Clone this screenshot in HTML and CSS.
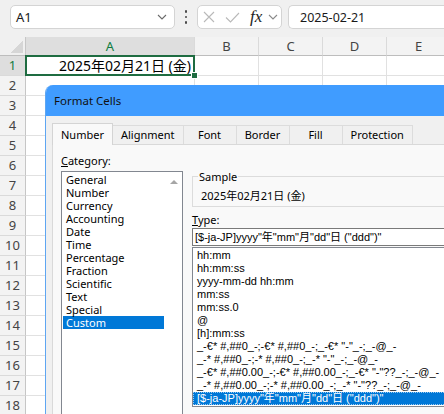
FILE: index.html
```html
<!DOCTYPE html>
<html lang="en">
<head>
    <meta charset="UTF-8">
    <meta name="viewport" content="width=device-width, initial-scale=1.0">
    <title>Format Cells</title>
    <link rel="stylesheet" href="styles.css">
</head>
<body>

<!-- Formula bar -->
<div class="formula-bar">
    <div class="name-box">
        <span>A1</span>
        <svg class="chevron" width="10" height="6" viewBox="0 0 10 6"><path d="M1 1l4 4 4-4" fill="none" stroke="#6b6b6b" stroke-width="1.1"/></svg>
    </div>
    <div class="dots"><span></span><span></span><span></span></div>
    <div class="fx-box">
        <svg class="icon-cancel" width="12" height="12" viewBox="0 0 12 12"><path d="M1 1l10 10M11 1L1 11" fill="none" stroke="#b9b9b9" stroke-width="1.1"/></svg>
        <svg class="icon-enter" width="15" height="11" viewBox="0 0 15 11"><path d="M1 5.5l4.5 4.5L14 1" fill="none" stroke="#b9b9b9" stroke-width="1.1"/></svg>
        <span class="fx">fx</span>
        <svg class="chevron" width="10" height="6" viewBox="0 0 10 6"><path d="M1 1l4 4 4-4" fill="none" stroke="#8a8a8a" stroke-width="1.1"/></svg>
    </div>
    <div class="formula-input">2025-02-21</div>
</div>

<!-- Sheet -->
<div class="sheet">
    <div class="row head">
        <div class="corner"></div>
        <div class="col col-a sel">A</div><div class="col">B</div><div class="col">C</div><div class="col">D</div><div class="col">E</div>
    </div>
    <div class="row">
        <div class="rh sel">1</div>
        <div class="cell cell-a active">2025年02月21日 (金)</div><div class="cell"></div><div class="cell"></div><div class="cell"></div><div class="cell"></div>
    </div>
    <div class="row"><div class="rh">2</div><div class="cell cell-a"></div><div class="cell"></div><div class="cell"></div><div class="cell"></div><div class="cell"></div></div>
    <div class="row"><div class="rh">3</div><div class="cell cell-a"></div><div class="cell"></div><div class="cell"></div><div class="cell"></div><div class="cell"></div></div>
    <div class="row"><div class="rh">4</div><div class="cell cell-a"></div><div class="cell"></div><div class="cell"></div><div class="cell"></div><div class="cell"></div></div>
    <div class="row"><div class="rh">5</div><div class="cell cell-a"></div><div class="cell"></div><div class="cell"></div><div class="cell"></div><div class="cell"></div></div>
    <div class="row"><div class="rh">6</div><div class="cell cell-a"></div><div class="cell"></div><div class="cell"></div><div class="cell"></div><div class="cell"></div></div>
    <div class="row"><div class="rh">7</div><div class="cell cell-a"></div><div class="cell"></div><div class="cell"></div><div class="cell"></div><div class="cell"></div></div>
    <div class="row"><div class="rh">8</div><div class="cell cell-a"></div><div class="cell"></div><div class="cell"></div><div class="cell"></div><div class="cell"></div></div>
    <div class="row"><div class="rh">9</div><div class="cell cell-a"></div><div class="cell"></div><div class="cell"></div><div class="cell"></div><div class="cell"></div></div>
    <div class="row"><div class="rh">10</div><div class="cell cell-a"></div><div class="cell"></div><div class="cell"></div><div class="cell"></div><div class="cell"></div></div>
    <div class="row"><div class="rh">11</div><div class="cell cell-a"></div><div class="cell"></div><div class="cell"></div><div class="cell"></div><div class="cell"></div></div>
    <div class="row"><div class="rh">12</div><div class="cell cell-a"></div><div class="cell"></div><div class="cell"></div><div class="cell"></div><div class="cell"></div></div>
    <div class="row"><div class="rh">13</div><div class="cell cell-a"></div><div class="cell"></div><div class="cell"></div><div class="cell"></div><div class="cell"></div></div>
    <div class="row"><div class="rh">14</div><div class="cell cell-a"></div><div class="cell"></div><div class="cell"></div><div class="cell"></div><div class="cell"></div></div>
    <div class="row"><div class="rh">15</div><div class="cell cell-a"></div><div class="cell"></div><div class="cell"></div><div class="cell"></div><div class="cell"></div></div>
    <div class="row"><div class="rh">16</div><div class="cell cell-a"></div><div class="cell"></div><div class="cell"></div><div class="cell"></div><div class="cell"></div></div>
    <div class="row"><div class="rh">17</div><div class="cell cell-a"></div><div class="cell"></div><div class="cell"></div><div class="cell"></div><div class="cell"></div></div>
    <div class="row"><div class="rh">18</div><div class="cell cell-a"></div><div class="cell"></div><div class="cell"></div><div class="cell"></div><div class="cell"></div></div>
</div>

<!-- Format Cells dialog -->
<div class="dialog">
    <div class="dialog-title">Format Cells</div>

    <div class="tabs">
        <div class="tab active">Number</div>
        <div class="tab">Alignment</div>
        <div class="tab">Font</div>
        <div class="tab">Border</div>
        <div class="tab">Fill</div>
        <div class="tab">Protection</div>
    </div>

    <div class="tab-panel">
        <div class="category">
            <div class="label"><u>C</u>ategory:</div>
            <div class="listbox">
                <ul class="category-list">
                    <li>General</li>
                    <li>Number</li>
                    <li>Currency</li>
                    <li>Accounting</li>
                    <li>Date</li>
                    <li>Time</li>
                    <li>Percentage</li>
                    <li>Fraction</li>
                    <li>Scientific</li>
                    <li>Text</li>
                    <li>Special</li>
                    <li class="selected">Custom</li>
                </ul>
                <div class="scrollbar"><span class="scroll-up"></span></div>
            </div>
        </div>

        <div class="details">
            <fieldset class="sample">
                <legend>Sample</legend>
                <div class="sample-value">2025年02月21日 (金)</div>
            </fieldset>

            <div class="label type-label"><u>T</u>ype:</div>
            <div class="type-input">[$-ja-JP]yyyy"年"mm"月"dd"日 ("ddd")"</div>
            <ul class="type-list">
                <li>hh:mm</li>
                <li>hh:mm:ss</li>
                <li>yyyy-mm-dd hh:mm</li>
                <li>mm:ss</li>
                <li>mm:ss.0</li>
                <li>@</li>
                <li>[h]:mm:ss</li>
                <li>_-€* #,##0_-;-€* #,##0_-;_-€* "-"_-;_-@_-</li>
                <li>_-* #,##0_-;-* #,##0_-;_-* "-"_-;_-@_-</li>
                <li>_-€* #,##0.00_-;-€* #,##0.00_-;_-€* "-"??_-;_-@_-</li>
                <li>_-* #,##0.00_-;-* #,##0.00_-;_-* "-"??_-;_-@_-</li>
                <li class="selected">[$-ja-JP]yyyy"年"mm"月"dd"日 ("ddd")"</li>
            </ul>
        </div>
    </div>
</div>

</body>
</html>
```

FILE: styles.css
```css
body {
    margin: 0;
    width: 444px;
    height: 414px;
    overflow: hidden;
    position: relative;
    font-family: "Noto Sans", "Noto Sans CJK JP", sans-serif;
    color: #000;
    background-color: #fff;
}

/* Formula bar */
.formula-bar {
    display: flex;
    align-items: flex-start;
    height: 37px;
    padding: 5px 0 0 10px;
    box-sizing: border-box;
    background-color: #f0f0f0;
}

.name-box, .fx-box, .formula-input {
    height: 24px;
    box-sizing: border-box;
    background-color: #fff;
    border: 1px solid #d4d4d4;
    border-radius: 5px;
    display: flex;
    align-items: center;
}

.name-box {
    width: 165px;
    padding: 0 7px 0 5px;
    justify-content: space-between;
    font-size: 13px;
    color: #1a1a1a;
}

.dots {
    width: 22px;
    height: 24px;
    display: flex;
    flex-direction: column;
    align-items: center;
    justify-content: center;
    gap: 3px;
}

.dots span {
    width: 2.5px;
    height: 2.5px;
    border-radius: 50%;
    background-color: #4a4a4a;
}

.fx-box {
    width: 85px;
    padding-left: 5px;
}

.icon-enter {
    margin-left: 10px;
}

.fx {
    margin-left: 10px;
    width: 16px;
    font-family: "Liberation Serif", "DejaVu Serif", serif;
    font-style: italic;
    font-size: 17px;
    line-height: 20px;
    color: #222;
}

.fx-box .chevron {
    margin-left: 2px;
}

.formula-input {
    flex: 1;
    margin-left: 6px;
    padding-left: 11px;
    border-right: none;
    border-radius: 5px 0 0 5px;
    font-size: 12.5px;
    color: #1a1a1a;
}

/* Sheet grid */
.row {
    display: flex;
    height: 20px;
}

.row.head {
    height: 19px;
}

.corner, .col, .rh, .cell {
    box-sizing: border-box;
    flex-shrink: 0;
}

.corner {
    width: 26px;
    border-right: 1px solid #c6c6c6;
    border-bottom: 1px solid #bdbdbd;
    background: #f0f0f0 linear-gradient(to bottom right, transparent 50%, #d6d6d6 50%) no-repeat right 2px bottom 2px / 13px 13px;
}

.col {
    width: 64px;
    background-color: #f3f3f3;
    border-right: 1px solid #dadada;
    border-bottom: 1px solid #bdbdbd;
    text-align: center;
    font-size: 13px;
    line-height: 18px;
    color: #444;
}

.col.sel {
    background-color: #dedede;
    color: #107c41;
}

.rh {
    width: 26px;
    background-color: #f3f3f3;
    border-right: 1px solid #c6c6c6;
    border-bottom: 1px solid #dadada;
    text-align: center;
    font-size: 13px;
    line-height: 19px;
    color: #444;
}

.rh.sel {
    background-color: #dedede;
    color: #107c41;
}

.cell {
    width: 64px;
    border-right: 1px solid #e1e1e1;
    border-bottom: 1px solid #e1e1e1;
}

.col.col-a, .cell.cell-a {
    width: 169px;
}

.cell.active {
    position: relative;
    text-align: right;
    padding-right: 3px;
    font-size: 14px;
    line-height: 19px;
    white-space: nowrap;
    color: #000;
}

.cell.active::before {
    content: "";
    position: absolute;
    top: -1px;
    left: -1px;
    right: -1px;
    bottom: -1px;
    border: 2px solid #1e6c41;
}

.cell.active::after {
    content: "";
    position: absolute;
    right: -4px;
    bottom: -4px;
    width: 5px;
    height: 5px;
    background-color: #1e6c41;
    border: 1px solid #fff;
}

/* Dialog */
.dialog {
    position: absolute;
    left: 45px;
    top: 85px;
    width: 430px;
    height: 360px;
    background-color: #f0f0f0;
    border-left: 1px solid #5ea6f2;
    border-radius: 8px 0 0 0;
    overflow: hidden;
    font-size: 11px;
}

.dialog-title {
    height: 31px;
    padding-left: 8px;
    background-color: #409cff;
    font-size: 11.5px;
    line-height: 31px;
    color: #111;
}

.tabs {
    display: flex;
    align-items: flex-end;
    padding: 7px 0 0 6px;
}

.tab {
    min-width: 54px;
    height: 19px;
    padding: 0 8px;
    box-sizing: border-box;
    border: 1px solid #dcdcdc;
    border-bottom: none;
    margin-left: -1px;
    text-align: center;
    line-height: 18px;
    background-color: #f0f0f0;
}

.tab:first-child {
    margin-left: 0;
}

.tab.active {
    position: relative;
    z-index: 1;
    height: 22px;
    margin-bottom: -1px;
    line-height: 21px;
    background-color: #f9f9f9;
    border-color: #d4d4d4;
}

.tab-panel {
    display: flex;
    gap: 9px;
    margin-left: 6px;
    height: 300px;
    padding: 9px 0 0 8px;
    background-color: #f9f9f9;
    border: 1px solid #d9d9d9;
}

.label {
    line-height: 14px;
}

.listbox {
    display: flex;
    width: 122px;
    height: 250px;
    margin-top: 3px;
    box-sizing: border-box;
    border: 1px solid #828790;
    background-color: #fff;
    padding: 1px 0 0 1px;
}

.category-list, .type-list {
    list-style: none;
    margin: 0;
    padding: 0;
}

.category-list {
    width: 101px;
}

.category-list li {
    padding-left: 3px;
    line-height: 13px;
}

.category-list li.selected, .type-list li.selected {
    background-color: #0078d7;
    color: #fff;
}

.scrollbar {
    width: 17px;
    margin-left: 1px;
    display: flex;
    justify-content: center;
    padding-top: 7px;
}

.scroll-up {
    width: 0;
    height: 0;
    border-left: 4px solid transparent;
    border-right: 4px solid transparent;
    border-bottom: 4px solid #a6a6a6;
}

.details {
    width: 260px;
    display: flex;
    flex-direction: column;
}

.sample {
    margin: 16px 0 0;
    padding: 6px 8px 3px;
    border: 1px solid #dcdcdc;
}

.sample legend {
    margin-left: -3px;
    padding: 0 1px;
    line-height: 13px;
}

.sample-value {
    line-height: 14px;
}

.type-label {
    margin-top: 6px;
}

.type-input, .type-list {
    font-family: "Liberation Sans", "Noto Sans CJK JP", sans-serif;
    font-size: 11px;
    background-color: #fff;
}

.type-input {
    margin-top: 1px;
    height: 18px;
    box-sizing: border-box;
    border: 1px solid #7a7a7a;
    border-right: none;
    padding-left: 2px;
    line-height: 17px;
    white-space: nowrap;
}

.type-list {
    margin-top: 1px;
    height: 160px;
    box-sizing: border-box;
    border: 1px solid #828790;
    border-right: none;
    padding-top: 1px;
}

.type-list li {
    padding-left: 4px;
    line-height: 13px;
    white-space: nowrap;
}

.type-list li.selected {
    outline: 1px dotted rgba(255, 255, 255, 0.6);
    outline-offset: -1px;
}
```
